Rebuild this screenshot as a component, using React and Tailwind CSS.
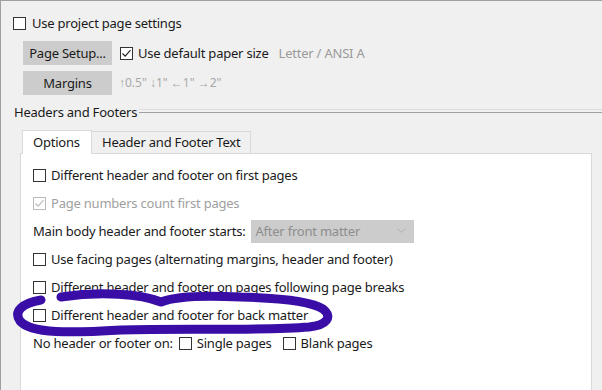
import React from "react";

const Box = ({ checked, disabled, className = "" }) => (
  <span
    className={`inline-flex items-center justify-center w-[13px] h-[13px] bg-white border shrink-0 ${
      disabled ? "border-[#bcbcbc]" : "border-[#333333]"
    } ${className}`}
  >
    {checked && (
      <svg width="11" height="11" viewBox="0 0 11 11">
        <path
          d="M1.5 5.5 L4.2 8.2 L9.5 2.2"
          fill="none"
          stroke={disabled ? "#bcbcbc" : "#222"}
          strokeWidth="1.2"
        />
      </svg>
    )}
  </span>
);

const Row = ({ children }) => (
  <div className="h-[28px] flex items-center">{children}</div>
);

const Check = ({ label, checked, disabled }) => (
  <Row>
    <Box checked={checked} disabled={disabled} />
    <span className={`ml-[5px] ${disabled ? "text-[#a0a0a0]" : ""}`}>{label}</span>
  </Row>
);

export default function App() {
  return (
    <div className="relative w-[602px] h-[390px] overflow-hidden bg-[#f0f0f0] border-t border-l border-[#a0a0a0] font-['Noto_Sans',sans-serif] text-[13px] tracking-[-0.22px] text-[#1a1a1a] leading-none">
      {/* Page settings */}
      <div className="pl-[12px] pt-[13px]">
        <div className="h-[18px] flex items-center">
          <Box />
          <span className="ml-[6px]">Use project page settings</span>
        </div>
        <div className="mt-[9px] ml-[10px] flex items-center h-[24px]">
          <button className="w-[89px] h-[24px] bg-[#cccccc]">Page Setup...</button>
          <Box checked className="ml-[8px]" />
          <span className="ml-[5px]">Use default paper size</span>
          <span className="ml-[10px] text-[#9a9a9a]">Letter / ANSI A</span>
        </div>
        <div className="mt-[6px] ml-[10px] flex items-center h-[24px]">
          <button className="w-[89px] h-[24px] bg-[#cccccc]">Margins</button>
          <span className="ml-[7px] text-[12px] tracking-normal text-[#a8a8a8]">↑0.5" ↓1" ←1" →2"</span>
        </div>
      </div>

      {/* Headers and Footers group */}
      <div className="mt-[7px] pl-[13px] h-[20px] flex items-center">
        <span>Headers and Footers</span>
        <div className="flex-1 ml-[2px] mb-[2px] flex flex-col">
          <div className="h-px bg-[#dcdcdc]" />
          <div className="h-[2px]" />
          <div className="h-px bg-[#a0a0a0]" />
        </div>
      </div>

      {/* Tabs */}
      <div className="mt-[7px] ml-[21px] flex items-end h-[24px]">
        <div className="h-[24px] w-[70px] bg-white border border-b-0 border-[#d9d9d9] flex items-center pl-[10px] relative z-10 -mb-px pb-px">
          Options
        </div>
        <div className="h-[22px] w-[159px] border border-l-0 border-b-0 border-[#d9d9d9] flex items-center pl-[10px]">
          Header and Footer Text
        </div>
      </div>
      <div className="ml-[19px] w-[572px] h-[240px] bg-white border border-[#d9d9d9] pl-[12px] pt-[7px]">
        <Check label="Different header and footer on first pages" />
        <Check label="Page numbers count first pages" checked disabled />
        <Row>
          <span>Main body header and footer starts:</span>
          <div className="ml-[6px] w-[163px] h-[23px] bg-[#cccccc] flex items-center justify-between pl-[4px] pr-[8px] text-[#8e8e8e]">
            <span>After front matter</span>
            <svg width="9" height="6" viewBox="0 0 9 6">
              <path d="M0.5 0.5 L4.5 4.5 L8.5 0.5" fill="none" stroke="#b0b0b0" strokeWidth="1" />
            </svg>
          </div>
        </Row>
        <Check label="Use facing pages (alternating margins, header and footer)" />
        <Check label="Different header and footer on pages following page breaks" />
        <Check label="Different header and footer for back matter" />
        <Row>
          <span>No header or footer on:</span>
          <Box className="ml-[6px]" />
          <span className="ml-[5px]">Single pages</span>
          <Box className="ml-[11px]" />
          <span className="ml-[5px]">Blank pages</span>
        </Row>
      </div>

      {/* hand-drawn annotation */}
      <svg className="absolute left-0 top-0 pointer-events-none" width="602" height="390">
        <path
          d="M60 296 C100 290 140 293 160 301 C172 296 200 294 240 296 C280 297 310 300 322 308 C332 316 326 324 308 326 C260 330 180 327 120 329 C70 332 30 333 19 320 C12 310 22 302 40 299"
          fill="none"
          stroke="#3a0ea6"
          strokeWidth="9"
          strokeLinecap="round"
          strokeLinejoin="round"
        />
      </svg>
    </div>
  );
}
